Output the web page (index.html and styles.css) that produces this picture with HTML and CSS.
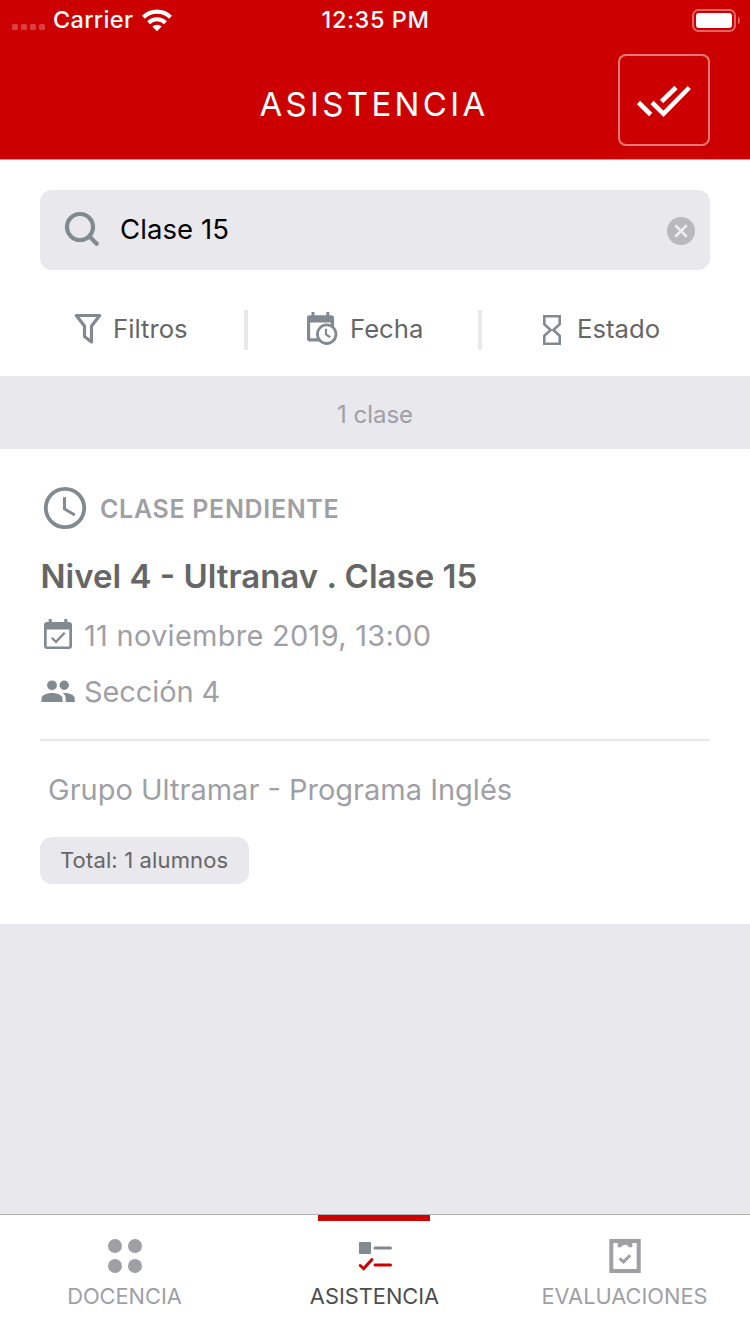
FILE: index.html
```html
<!DOCTYPE html>
<html lang="es">
<head>
<meta charset="utf-8">
<title>Asistencia</title>
<link rel="stylesheet" href="styles.css">
</head>
<body>
<div class="app">
  <header class="header">
    <div class="status">
      <div class="status-left">
        <svg width="34" height="8" viewBox="0 0 34 8" fill="#d94040"><rect x="0" y="1" width="6" height="6" rx="1.5"/><rect x="9" y="1" width="6" height="6" rx="1.5"/><rect x="18" y="1" width="6" height="6" rx="1.5"/><rect x="27" y="1" width="6" height="6" rx="1.5"/></svg>
        <span class="carrier">Carrier</span>
        <svg class="wifi" width="30" height="23" viewBox="0 0 30 23"><g fill="none" stroke="#fff" stroke-width="4.2"><path d="M1.400 8.200a19.400 19.400 0 0 1 27.200 0"/><path d="M6.600 13.700a12 12 0 0 1 16.800 0"/></g><path d="M10.300 17.500a7 7 0 0 1 9.400 0L15 22.300z" fill="#fff"/></svg>
      </div>
      <span class="time">12:35 PM</span>
      <svg class="battery" width="48" height="23" viewBox="0 0 48 23"><rect x="1" y="1" width="42" height="21" rx="5.5" fill="none" stroke="#e06666" stroke-width="2"/><rect x="4" y="4" width="36" height="15" rx="3" fill="#fff"/><path d="M46 7.500q2 1 2 4t-2 4z" fill="#e06666"/></svg>
    </div>
    <div class="nav">
      <h1 class="title">ASISTENCIA</h1>
      <button class="check-all" aria-label="Marcar todo"><svg width="92" height="92" viewBox="0 0 92 92" fill="none" stroke="#fff" stroke-width="4.6"><path d="M20.500 48.500l12.200 12"/><path d="M34 48.500l11.500 11.300L71.300 33.500"/><path d="M43.500 47.500L58 33.500"/></svg></button>
    </div>
  </header>

  <section class="tools">
    <div class="search">
      <svg class="search-icon" width="36" height="36" viewBox="0 0 36 36" fill="none" stroke="#828a91" stroke-width="4.200" stroke-linecap="round"><circle cx="16" cy="16" r="13"/><path d="M25.500 25.500l7.200 7.200"/></svg>
      <span class="query">Clase 15</span>
      <svg class="clear" width="28" height="28" viewBox="0 0 28 28"><circle cx="14" cy="14" r="14" fill="#b9b8bc"/><path d="M9 9l10 10M19 9L9 19" stroke="#eeedf1" stroke-width="2.600" stroke-linecap="round"/></svg>
    </div>
    <div class="filters">
      <div class="filter filter-funnel">
        <svg width="28" height="32" viewBox="0 0 28 32" fill="none" stroke="#828a91" stroke-width="3.200" stroke-linejoin="round"><path d="M2.300 2.500h23.400L17.500 13v16L10.500 23.500V13z"/></svg>
        <span>Filtros</span>
      </div>
      <div class="filter filter-date">
        <svg width="32" height="34" viewBox="0 0 32 34"><path d="M5.500 1h3v3.200h11.800V1h3v3.200h2a2.700 2.700 0 0 1 2.700 2.700V20h-3.200v-8.600H4.200v15.900H17v3.200H3.700A2.700 2.700 0 0 1 1 27.800V6.900a2.700 2.700 0 0 1 2.700-2.700h1.800z" fill="#828a91"/><circle cx="20.700" cy="23.200" r="9.300" fill="#fff" stroke="#828a91" stroke-width="2.800"/><path d="M20 17.800v5.700l4.200 2.700" fill="none" stroke="#828a91" stroke-width="2.200"/></svg>
        <span>Fecha</span>
      </div>
      <div class="filter filter-state">
        <svg width="20" height="30" viewBox="0 0 20 30" fill="none" stroke="#828a91" stroke-width="2.600"><path d="M2.300 1.300h15.400v7.800L11.300 15l6.400 5.900v7.800H2.300v-7.800L8.700 15 2.300 9.100z"/></svg>
        <span>Estado</span>
      </div>
    </div>
  </section>

  <div class="count">1 clase</div>

  <article class="card">
    <div class="pending">
      <svg width="44" height="44" viewBox="0 0 44 44" fill="none" stroke="#828a91"><circle cx="22" cy="22" r="19.200" stroke-width="3.800"/><path d="M21.500 11.300V23l10.300 6" stroke-width="3"/></svg>
      <span class="pending-label">CLASE PENDIENTE</span>
    </div>
    <h2 class="class-name">Nivel 4 - Ultranav . Clase 15</h2>
    <div class="meta meta-date">
      <svg width="36" height="34" viewBox="0 0 36 34"><path d="M8.700 1h3v3h12.600V1h3v3H29a3 3 0 0 1 3 3v21a3 3 0 0 1-3 3H7a3 3 0 0 1-3-3V7a3 3 0 0 1 3-3h1.700zM6.700 11.500v17h22.600v-17z" fill="#828a91" fill-rule="evenodd"/><path d="M11.800 19.700l4.200 4.200 8.700-9.200" fill="none" stroke="#828a91" stroke-width="2.300"/></svg>
      <span class="date">11 noviembre 2019, 13:00</span>
    </div>
    <div class="meta meta-section">
      <svg width="36" height="26" viewBox="0 0 36 26" fill="#828a91"><circle cx="12" cy="7.300" r="4.900"/><circle cx="24.200" cy="7.300" r="4.700"/><path d="M1.500 24v-3.500c0-4 6.500-5.500 10.500-5.500s10.500 1.500 10.500 5.500V24zM22.500 15c4.500-.5 12.200 1.200 12.200 5.300V24h-9v-3.700c0-2.300-1.200-4-3.200-5.300z"/></svg>
      <span class="section">Sección 4</span>
    </div>
    <div class="group">Grupo Ultramar - Programa Inglés</div>
    <div class="total"><span>Total: 1 alumnos</span></div>
  </article>

  <nav class="tabs">
    <div class="tab">
      <svg width="36" height="36" viewBox="0 0 36 36" fill="#9f9fa6"><circle cx="8" cy="8" r="7"/><circle cx="28" cy="8" r="7"/><circle cx="8" cy="28" r="7"/><circle cx="28" cy="28" r="7"/></svg>
      <span>DOCENCIA</span>
    </div>
    <div class="tab tab-active">
      <svg width="36" height="36" viewBox="0 0 36 36" fill="none" stroke-linecap="round"><rect x="2" y="4" width="12" height="12" rx="1" fill="#828a91"/><path d="M18 10h15.500" stroke="#828a91" stroke-width="3"/><path d="M18 27h15.500M3.200 27.500l3.500 3.100L15 21.500" stroke="#cc0000" stroke-width="3"/></svg>
      <span>ASISTENCIA</span>
    </div>
    <div class="tab">
      <svg width="36" height="36" viewBox="0 0 36 36"><path d="M2.300 1h31.400v34H2.300zM6.300 5v26h23.400V5h-4.400v4.300H22Q21.200 6.800 18 6.800t-4 2.500h-3.300V5z" fill="#9f9fa6" fill-rule="evenodd"/><path d="M12.600 20.300l4 3.600 6.600-6.600" fill="none" stroke="#9f9fa6" stroke-width="3"/></svg>
      <span>EVALUACIONES</span>
    </div>
  </nav>
</div>
</body>
</html>
```
FILE: styles.css
```css
* { box-sizing: border-box; }
body { margin: 0; font-family: Inter, "Liberation Sans", sans-serif; }
svg { display: block; flex: none; }
span, h1, h2 { white-space: nowrap; }
.app { width: 750px; height: 1334px; display: flex; flex-direction: column; background: #e9e8ed; }

.header { height: 160px; background: #cc0000; color: #fff; border-bottom: 1px solid #b5a5a8; }
.status { height: 40px; display: grid; grid-template-columns: 1fr auto 1fr; align-items: center; padding: 0 10px 0 12px; }
.status-left { display: flex; align-items: center; }
.status-left svg:first-child { margin-top: 14px; }
.carrier { width: 80px; font-size: 23.5px; font-weight: 500; margin-left: 7px; line-height: 40px; letter-spacing: 0.3px; }
.wifi { margin-left: 9px; }
.time { font-size: 23.5px; font-weight: 500; line-height: 40px; letter-spacing: 0.55px; margin-right: 1px; }
.battery { justify-self: end; }
.nav { height: 119px; padding: 14px 40px 0; display: grid; grid-template-columns: 92px 1fr 92px; }
.title { grid-column: 2; margin: 0 2px 0 0; text-align: center; font-size: 33px; font-weight: 400; letter-spacing: 3.35px; line-height: 101px; }
.check-all { width: 92px; height: 92px; padding: 0; border: 0; border-radius: 8px; box-shadow: inset 0 0 0 2px #e67a7a; background: none; }

.tools { height: 216px; background: #fff; padding: 30px 40px 0; }
.search { height: 80px; border-radius: 12px; background: #e9e8ed; display: flex; align-items: center; padding: 0 15px 0 24px; }
.search-icon { margin-bottom: 2px; }
.query { font-size: 27.5px; margin-left: 20px; flex: 1; line-height: 78px; letter-spacing: 0.1px; margin-bottom: 2px; }
.clear { margin-top: 2px; }
.filters { margin-top: 40px; height: 40px; display: grid; grid-template-columns: 204px 234px 232px; }
.filter { display: flex; align-items: center; color: #666; font-size: 25.7px; line-height: 38px; }
.filter span { margin-bottom: 2px; }
.filter + .filter { border-left: 4px solid #e9e8ed; }
.filter-funnel { padding-left: 34px; }
.filter-funnel svg { margin-bottom: 2px; }
.filter-funnel span { margin-left: 11px; }
.filter-date { padding-left: 58px; }
.filter-date svg { margin-bottom: 4px; }
.filter-date span { margin-left: 12px; }
.filter-state { padding-left: 60px; }
.filter-state span { margin-left: 15px; }

.count { height: 73px; text-align: center; line-height: 78px; font-size: 24px; color: #9f9fa6; }

.card { height: 475px; background: #fff; padding: 36px 40px 0; color: #9f9fa6; }
.pending { display: flex; align-items: center; height: 46px; padding-left: 3px; }
.pending-label { font-size: 25px; font-weight: 600; margin: 2px 0 0 13px; letter-spacing: 0.68px; }
.class-name { margin: 22px 0 0 0.5px; color: #666; font-size: 33px; font-weight: 600; line-height: 46px; }
.meta { display: flex; align-items: center; height: 56px; font-size: 29px; }
.meta-date { margin-top: 8px; }
.meta-date svg { margin-bottom: 1px; }
.meta span { margin-left: 8px; }
.date { letter-spacing: 0.27px; }
.section { letter-spacing: -0.1px; }
.group { margin-top: 20px; border-top: 2px solid #e9e8ed; padding: 19px 0 0 8px; height: 98px; line-height: 60px; font-size: 29px; }
.total { width: 209px; height: 47px; border-radius: 12px; background: #e9e8ed; color: #666; font-size: 22px; line-height: 47px; padding-left: 20px; letter-spacing: 0.14px; }

.tabs { margin-top: auto; height: 120px; background: #fff; border-top: 1px solid #b2b1b5; display: grid; grid-template-columns: repeat(3, 1fr); }
.tab { display: flex; flex-direction: column; align-items: center; padding-top: 23px; color: #9f9fa6; font-size: 21.8px; }
.tab span { margin-top: 7px; margin-right: 1px; line-height: 30px; }
.tab-active { color: #4d4d4d; background: linear-gradient(#cc0000, #cc0000) 68px 0 / 112px 6px no-repeat; }
```
